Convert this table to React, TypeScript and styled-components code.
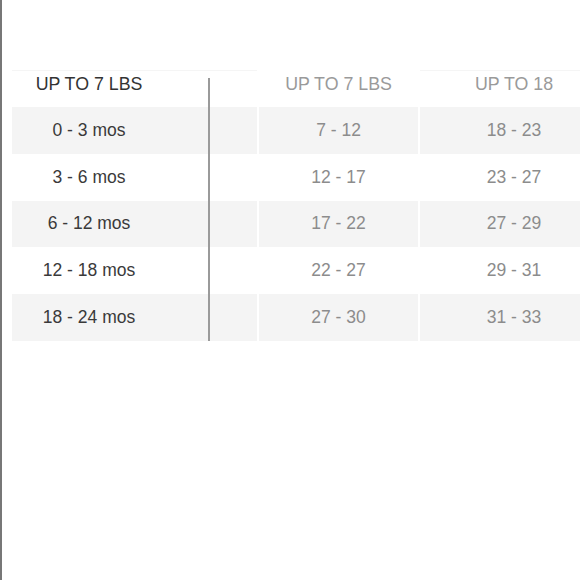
import styled, { createGlobalStyle } from "styled-components";

const GlobalStyle = createGlobalStyle`
  html, body {
    margin: 0;
    padding: 0;
    background: #ffffff;
  }
  body {
    font-family: "Liberation Sans", Arial, sans-serif;
  }
`;

const headers = ["UP TO 7 LBS", "UP TO 7 LBS", "UP TO 18"];

const rows = [
  ["0 - 3 mos", "7 - 12", "18 - 23"],
  ["3 - 6 mos", "12 - 17", "23 - 27"],
  ["6 - 12 mos", "17 - 22", "27 - 29"],
  ["12 - 18 mos", "22 - 27", "29 - 31"],
  ["18 - 24 mos", "27 - 30", "31 - 33"],
];

export default function App() {
  return (
    <>
      <GlobalStyle />
      <Page>
        <Table>
          <HeaderRow>
            {headers.map((h, i) => (
              <HeaderCell key={i} $col={i}>
                {h}
              </HeaderCell>
            ))}
          </HeaderRow>
          {rows.map((row, r) => (
            <Row key={r}>
              {row.map((cell, i) => (
                <Cell key={i} $col={i} $shaded={r % 2 === 0}>
                  {cell}
                </Cell>
              ))}
            </Row>
          ))}
          <Divider />
        </Table>
      </Page>
    </>
  );
}

const Page = styled.div`
  width: 580px;
  height: 580px;
  box-sizing: border-box;
  border-left: 2px solid #777777;
  padding: 70px 0 0 10px;
  overflow: hidden;
`;

const Table = styled.div`
  position: relative;
  display: flex;
  flex-direction: column;
  width: 568px;
`;

const columns = "245px 159px 160px";

const HeaderRow = styled.div`
  display: grid;
  grid-template-columns: ${columns};
  column-gap: 2px;
  height: 37px;
`;

const Row = styled.div`
  display: grid;
  grid-template-columns: ${columns};
  column-gap: 2px;
  height: 46.8px;
`;

const colPadding = (col: number) =>
  col === 0 ? "0 91px 0 0" : col === 2 ? "0 0 0 28px" : "0";

const HeaderCell = styled.div<{ $col: number }>`
  display: flex;
  align-items: center;
  justify-content: center;
  padding: ${({ $col }) => colPadding($col)};
  padding-bottom: 10px;
  font-size: 17.8px;
  color: ${({ $col }) => ($col === 0 ? "#333333" : "#9a9a9a")};
  border-top: 1px solid
    ${({ $col }) => ($col === 1 ? "transparent" : "#f5f5f5")};
`;

const Cell = styled.div<{ $col: number; $shaded: boolean }>`
  display: flex;
  align-items: center;
  justify-content: center;
  padding: ${({ $col }) => colPadding($col)};
  font-size: 17.5px;
  background: ${({ $shaded }) => ($shaded ? "#f4f4f4" : "#ffffff")};
  color: ${({ $col }) => ($col === 0 ? "#3a3a3a" : "#8c8c8c")};
`;

const Divider = styled.div`
  position: absolute;
  left: 196px;
  top: 8px;
  bottom: 0;
  width: 2px;
  background: #9a9a9a;
`;
